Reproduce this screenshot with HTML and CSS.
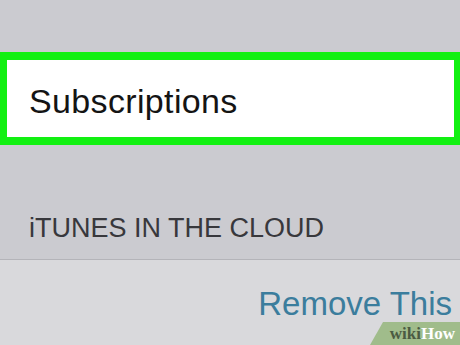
FILE: index.html
```html
<!DOCTYPE html>
<html>
<head>
<meta charset="utf-8">
<link rel="stylesheet" href="styles.css">
</head>
<body>
<div class="screen">
  <div class="top-gap"></div>
  <div class="row-highlight">
    <span class="row-label">Subscriptions</span>
  </div>
  <div class="section-header">iTUNES IN THE CLOUD</div>
  <div class="lower">
    <span class="remove-link">Remove This</span>
  </div>
  <div class="badge"><span class="badge-wiki">wiki</span><span class="badge-how">How</span></div>
</div>
</body>
</html>
```
FILE: styles.css
```css
html, body {
  margin: 0;
  padding: 0;
}
body {
  width: 460px;
  height: 345px;
  overflow: hidden;
  background: #cbcbd0;
  font-family: "Liberation Sans", Arial, sans-serif;
}
.screen {
  position: relative;
  width: 460px;
  height: 345px;
  display: flex;
  flex-direction: column;
}
.top-gap {
  height: 52px;
  flex: none;
}
.row-highlight {
  flex: none;
  box-sizing: border-box;
  height: 93px;
  background: #ffffff;
  border: 7px solid #12f012;
  border-top-width: 8px;
  border-bottom-width: 8px;
  border-right-width: 6px;
  padding: 5px 0 0 22px;
}
.row-label {
  display: block;
  font-size: 34px;
  line-height: 72px;
  letter-spacing: 0.35px;
  color: #141414;
}
.section-header {
  flex: none;
  box-sizing: border-box;
  height: 115px;
  padding: 67px 0 0 29px;
  font-size: 27px;
  line-height: 32px;
  color: #38383c;
  border-bottom: 1px solid #b4b4b9;
}
.lower {
  flex: 1;
  background: #d9d9dc;
  display: flex;
  justify-content: flex-end;
  padding: 24px 8px 0 0;
}
.remove-link {
  font-size: 33px;
  line-height: 40px;
  height: 40px;
  color: #3b7d9d;
}
.badge {
  position: absolute;
  right: 0;
  bottom: 0;
  width: 90px;
  height: 23px;
  background: #a0bc8b;
  clip-path: polygon(13px 0, 100% 0, 100% 100%, 0 100%);
  font-family: "Liberation Serif", "Times New Roman", serif;
  font-weight: bold;
  font-size: 17px;
  line-height: 23px;
  text-align: right;
  padding-right: 5px;
  box-sizing: border-box;
}
.badge-wiki {
  color: #4b5b42;
}
.badge-how {
  color: #ffffff;
}
```
